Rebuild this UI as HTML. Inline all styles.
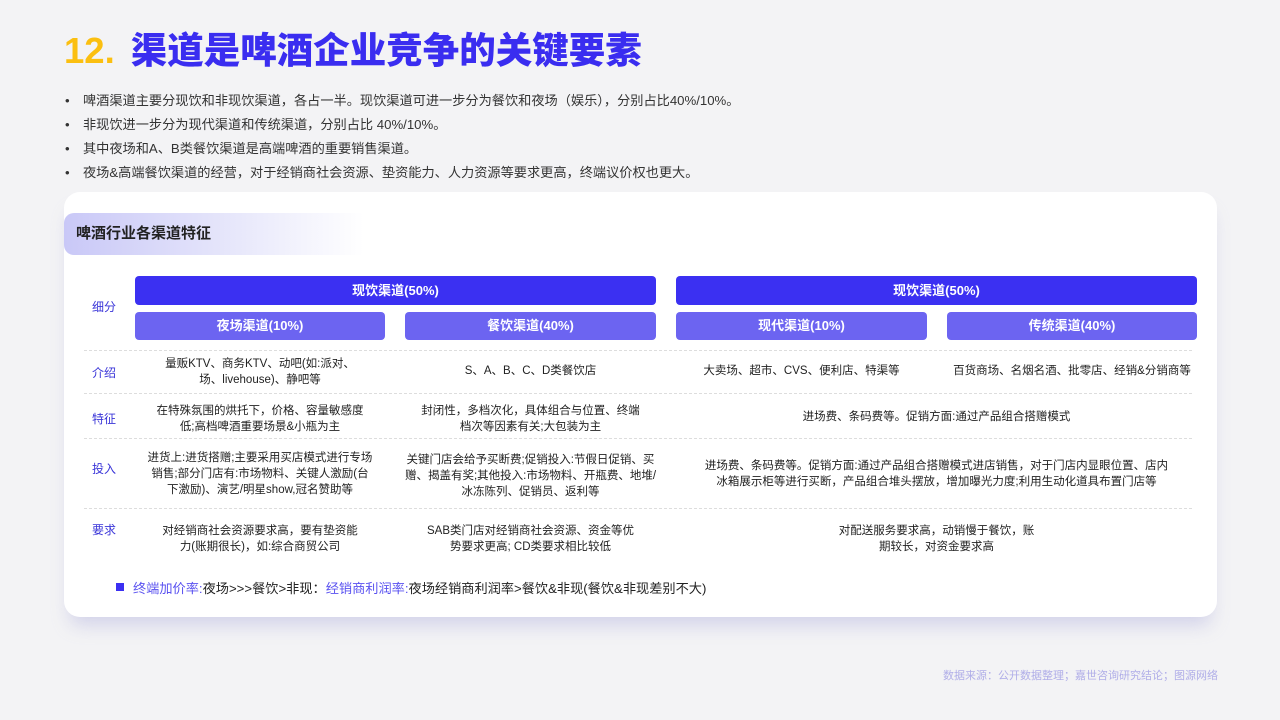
<!DOCTYPE html>
<html><head><meta charset="utf-8"><style>
*{margin:0;padding:0;box-sizing:border-box}
body{width:1280px;height:720px;background:#f3f3f5;font-family:"Liberation Sans","Noto Sans CJK SC",sans-serif;position:relative;overflow:hidden;color:#222}
.abs{position:absolute}
h1{position:absolute;left:64px;top:21px;font-size:36.5px;font-weight:900;color:#3a2df0;white-space:nowrap}
h1 span{color:#fbbf10;margin-right:16px}
.bl{position:absolute;left:64px;font-size:13.2px;line-height:18px;color:#333;white-space:nowrap}
.bl:before{content:"•";position:absolute;left:1px;top:0}
.bl b{font-weight:normal;margin-left:19px}
.card{position:absolute;left:64px;top:192px;width:1153px;height:425px;background:#fff;border-radius:16px;box-shadow:0 14px 18px -6px rgba(170,170,220,.45)}
.tag{position:absolute;left:64px;top:213px;width:300px;height:42px;border-radius:10px 0 0 10px;background:linear-gradient(90deg,#c9c8f7,#e9e9fb 60%,rgba(255,255,255,0));font-weight:bold;font-size:15px;line-height:42px;padding-left:12px;color:#222}
.bar{position:absolute;color:#fff;font-size:13px;font-weight:bold;text-align:center;border-radius:4px}
.t{background:#3b30f2;height:29px;line-height:29px;top:276px}
.s{background:#6c64f1;height:28px;line-height:28px;top:312px}
.lab{position:absolute;left:92px;font-size:12px;color:#3a35d8}
.c{position:absolute;font-size:11.5px;line-height:16px;text-align:center;color:#222}
.hr{position:absolute;left:84px;width:1108px;border-top:1px dashed #ddd}
</style></head><body>
<h1><span>12.</span>渠道是啤酒企业竞争的关键要素</h1>
<div class="bl" style="top:92px"><b>啤酒渠道主要分现饮和非现饮渠道，各占一半。现饮渠道可进一步分为餐饮和夜场（娱乐），分别占比40%/10%。</b></div>
<div class="bl" style="top:116px"><b>非现饮进一步分为现代渠道和传统渠道，分别占比 40%/10%。</b></div>
<div class="bl" style="top:140px"><b>其中夜场和A、B类餐饮渠道是高端啤酒的重要销售渠道。</b></div>
<div class="bl" style="top:164px"><b>夜场&amp;高端餐饮渠道的经营，对于经销商社会资源、垫资能力、人力资源等要求更高，终端议价权也更大。</b></div>
<div class="card"></div>
<div class="tag">啤酒行业各渠道特征</div>
<div class="bar t" style="left:135px;width:521px">现饮渠道(50%)</div>
<div class="bar t" style="left:676px;width:521px">现饮渠道(50%)</div>
<div class="bar s" style="left:135px;width:250px">夜场渠道(10%)</div>
<div class="bar s" style="left:405px;width:251px">餐饮渠道(40%)</div>
<div class="bar s" style="left:676px;width:251px">现代渠道(10%)</div>
<div class="bar s" style="left:947px;width:250px">传统渠道(40%)</div>
<div class="lab" style="top:298px">细分</div>
<div class="hr" style="top:350px"></div>
<div class="lab" style="top:364px">介绍</div>
<div class="c" style="left:135px;width:250px;top:356px">量贩KTV、商务KTV、动吧(如:派对、<br>场、livehouse)、静吧等</div>
<div class="c" style="left:405px;width:251px;top:363px">S、A、B、C、D类餐饮店</div>
<div class="c" style="left:676px;width:251px;top:363px">大卖场、超市、CVS、便利店、特渠等</div>
<div class="c" style="left:940px;width:264px;top:363px">百货商场、名烟名酒、批零店、经销&amp;分销商等</div>
<div class="hr" style="top:393px"></div>
<div class="lab" style="top:410px">特征</div>
<div class="c" style="left:135px;width:250px;top:403px">在特殊氛围的烘托下，价格、容量敏感度<br>低;高档啤酒重要场景&amp;小瓶为主</div>
<div class="c" style="left:405px;width:251px;top:403px">封闭性，多档次化，具体组合与位置、终端<br>档次等因素有关;大包装为主</div>
<div class="c" style="left:676px;width:521px;top:409px">进场费、条码费等。促销方面:通过产品组合搭赠模式</div>
<div class="hr" style="top:438px"></div>
<div class="lab" style="top:460px">投入</div>
<div class="c" style="left:135px;width:250px;top:450px">进货上:进货搭赠;主要采用买店模式进行专场<br>销售;部分门店有:市场物料、关键人激励(台<br>下激励)、演艺/明星show,冠名赞助等</div>
<div class="c" style="left:400px;width:261px;top:452px">关键门店会给予买断费;促销投入:节假日促销、买<br>赠、揭盖有奖;其他投入:市场物料、开瓶费、地堆/<br>冰冻陈列、促销员、返利等</div>
<div class="c" style="left:676px;width:521px;top:458px">进场费、条码费等。促销方面:通过产品组合搭赠模式进店销售，对于门店内显眼位置、店内<br>冰箱展示柜等进行买断，产品组合堆头摆放，增加曝光力度;利用生动化道具布置门店等</div>
<div class="hr" style="top:508px"></div>
<div class="lab" style="top:521px">要求</div>
<div class="c" style="left:135px;width:250px;top:523px">对经销商社会资源要求高，要有垫资能<br>力(账期很长)，如:综合商贸公司</div>
<div class="c" style="left:405px;width:251px;top:523px">SAB类门店对经销商社会资源、资金等优<br>势要求更高; CD类要求相比较低</div>
<div class="c" style="left:676px;width:521px;top:523px">对配送服务要求高，动销慢于餐饮，账<br>期较长，对资金要求高</div>
<div class="abs" style="left:116px;top:583px;width:8px;height:8px;background:#3b30f2"></div>
<div class="abs" style="left:133px;top:578px;font-size:13.2px;white-space:nowrap"><span style="color:#5a52f0">终端加价率:</span>夜场&gt;&gt;&gt;餐饮&gt;非现：<span style="color:#5a52f0">经销商利润率:</span>夜场经销商利润率&gt;餐饮&amp;非现(餐饮&amp;非现差别不大)</div>
<div class="abs" style="right:62px;top:667px;font-size:11px;color:#b0aee8">数据来源：公开数据整理；嘉世咨询研究结论；图源网络</div>
</body></html>
